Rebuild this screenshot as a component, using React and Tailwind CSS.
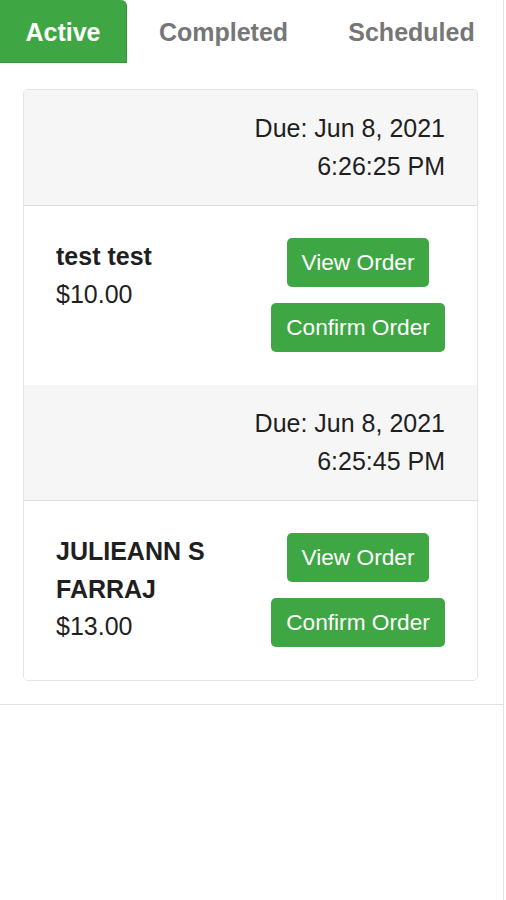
import React from "react";

const orders = [
  { due: "Due: Jun 8, 2021", time: "6:26:25 PM", name: "test test", price: "$10.00" },
  { due: "Due: Jun 8, 2021", time: "6:25:45 PM", name: "JULIEANN S FARRAJ", price: "$13.00" },
];

export default function App() {
  return (
    <div
      className="w-[504px] min-h-[900px] border-r border-[#e2e2e2] bg-white text-[#1f1f1f]"
      style={{ fontFamily: '"Liberation Sans", Arial, Helvetica, sans-serif' }}
    >
      <div className="flex h-[63px] gap-[3px]">
        <div className="flex w-[127px] items-center justify-center rounded-tr-[6px] border-b border-r border-[#37963a] bg-[#3ea743] pt-[3px] text-[25px] font-bold text-white">
          Active
        </div>
        <div className="flex w-[187px] items-center justify-center pt-[3px] text-[25px] font-bold text-[#767676]">
          Completed
        </div>
        <div className="flex w-[183px] items-center justify-center pt-[3px] text-[25px] font-bold text-[#767676]">
          Scheduled
        </div>
      </div>

      <div className="border-b border-[#e2e2e2] pb-[23px] pl-[23px] pr-[25px] pt-[26px]">
        <div className="overflow-hidden rounded-[5px] border border-[#e4e4e4]">
          {orders.map((o, i) => (
            <div key={i}>
              <div className="border-b border-[#dedede] bg-[#f6f6f6] px-[32px] py-[20px] text-right text-[25px] leading-[37.5px]">
                <div>{o.due}</div>
                <div>{o.time}</div>
              </div>
              <div className="flex items-start justify-between bg-white px-[32px] pb-[33px] pt-[32px] text-[25px] leading-[37.5px]">
                <div className="w-[190px]">
                  <div className="font-bold">{o.name}</div>
                  <div>{o.price}</div>
                </div>
                <div className="flex flex-col items-center gap-[16px]">
                  <button className="flex h-[49px] w-[142px] items-center justify-center rounded-[5px] bg-[#3ea743] text-[22.7px] text-white">
                    View Order
                  </button>
                  <button className="flex h-[49px] w-[174px] items-center justify-center rounded-[5px] bg-[#3ea743] text-[22.7px] text-white">
                    Confirm Order
                  </button>
                </div>
              </div>
            </div>
          ))}
        </div>
      </div>
    </div>
  );
}
